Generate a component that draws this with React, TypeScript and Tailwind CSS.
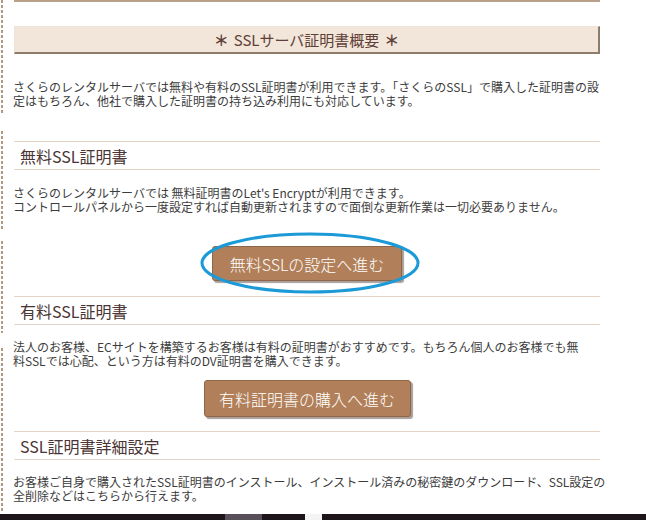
import React from "react";

const font = { fontFamily: '"Noto Sans CJK JP", "Noto Sans", sans-serif' };

function Dashed({ h, mt }: { h: string; mt: string }) {
  return (
    <div
      className={`${h} ${mt} w-[2px] bg-[repeating-linear-gradient(to_bottom,#b09a84_0px,#b09a84_3px,transparent_3px,transparent_5px)]`}
    />
  );
}

function SectionHead({ children, mt }: { children: React.ReactNode; mt: string }) {
  return (
    <div
      className={`${mt} h-[29px] border-y border-[#e2d3c4] flex items-center pl-[6px] text-[16px] leading-none text-[#4b3434]`}
    >
      {children}
    </div>
  );
}

function Button({ children, w, h }: { children: React.ReactNode; w: string; h: string }) {
  return (
    <div
      className={`${w} ${h} flex items-center justify-center rounded-[3px] border border-[#8f6547] bg-[#b17f59] text-[16px] leading-none text-white font-light shadow-[2px_2px_1px_rgba(60,40,30,0.45)]`}
    >
      {children}
    </div>
  );
}

export default function App() {
  return (
    <div className="w-[646px] h-[520px] overflow-hidden bg-white flex flex-col" style={font}>
      <div className="flex-1 flex flex-row">
        <div className="ml-[1px] flex flex-col">
          <Dashed h="h-[115px]" mt="mt-0" />
          <Dashed h="h-[98px]" mt="mt-[16px]" />
          <Dashed h="h-[92px]" mt="mt-[12px]" />
          <Dashed h="h-[165px]" mt="mt-[15px]" />
        </div>
        <div className="ml-[11px] w-[586px] flex flex-col">
          <div className="h-[2px] bg-[#b8a089]" />

          <div className="mt-[24px] h-[28px] bg-[#f2e5d9] border-t border-l border-[#efe2d6] border-b-2 border-r-2 border-b-[#8d7c6c] border-r-[#8d7c6c] flex items-center justify-center gap-[5px] text-[15px] leading-none text-[#5e4038]">
            <span className="font-bold">＊</span>
            <span>SSLサーバ証明書概要</span>
            <span className="font-bold">＊</span>
          </div>

          <p className="mt-[26px] text-[12px] leading-[14px] text-[#3c3c3c] whitespace-nowrap -ml-[1px]">
            さくらのレンタルサーバでは無料や有料のSSL証明書が利用できます。「さくらのSSL」で購入した証明書の設
            <br />
            定はもちろん、他社で購入した証明書の持ち込み利用にも対応しています。
          </p>

          <SectionHead mt="mt-[33px]">無料SSL証明書</SectionHead>

          <p className="mt-[16px] text-[12px] leading-[14px] text-[#3c3c3c] whitespace-nowrap -ml-[1px]">
            さくらのレンタルサーバでは 無料証明書のLet's Encryptが利用できます。
            <br />
            コントロールパネルから一度設定すれば自動更新されますので面倒な更新作業は一切必要ありません。
          </p>

          <div className="mt-[32px] flex justify-center">
            <div className="relative">
              <Button w="w-[190px]" h="h-[35px]">無料SSLの設定へ進む</Button>
              <svg
                className="absolute left-[-12px] top-[-14px] pointer-events-none"
                width="220"
                height="62"
                viewBox="0 0 220 62"
              >
                <ellipse cx="110" cy="31" rx="108" ry="29" fill="none" stroke="#1b9ad7" strokeWidth="3" />
              </svg>
            </div>
          </div>

          <SectionHead mt="mt-[15px]">有料SSL証明書</SectionHead>

          <p className="mt-[15px] text-[12px] leading-[14px] text-[#3c3c3c] whitespace-nowrap -ml-[1px]">
            法人のお客様、ECサイトを構築するお客様は有料の証明書がおすすめです。もちろん個人のお客様でも無
            <br />
            料SSLでは心配、という方は有料のDV証明書を購入できます。
          </p>

          <div className="mt-[12px] flex justify-center">
            <Button w="w-[207px]" h="h-[37px]">有料証明書の購入へ進む</Button>
          </div>

          <SectionHead mt="mt-[14px]">SSL証明書詳細設定</SectionHead>

          <p className="mt-[15px] text-[12px] leading-[14px] text-[#3c3c3c] whitespace-nowrap -ml-[1px]">
            お客様ご自身で購入されたSSL証明書のインストール、インストール済みの秘密鍵のダウンロード、SSL設定の
            <br />
            全削除などはこちらから行えます。
          </p>
        </div>
      </div>
      <div className="h-[6px] flex flex-row shrink-0">
        <div className="w-[225px] bg-[#1d1519]" />
        <div className="w-[37px] bg-[#57505a]" />
        <div className="w-[43px] bg-[#1d1519]" />
        <div className="w-[17px] bg-[#f4f4f4]" />
        <div className="flex-1 bg-[#1d1519]" />
      </div>
    </div>
  );
}
